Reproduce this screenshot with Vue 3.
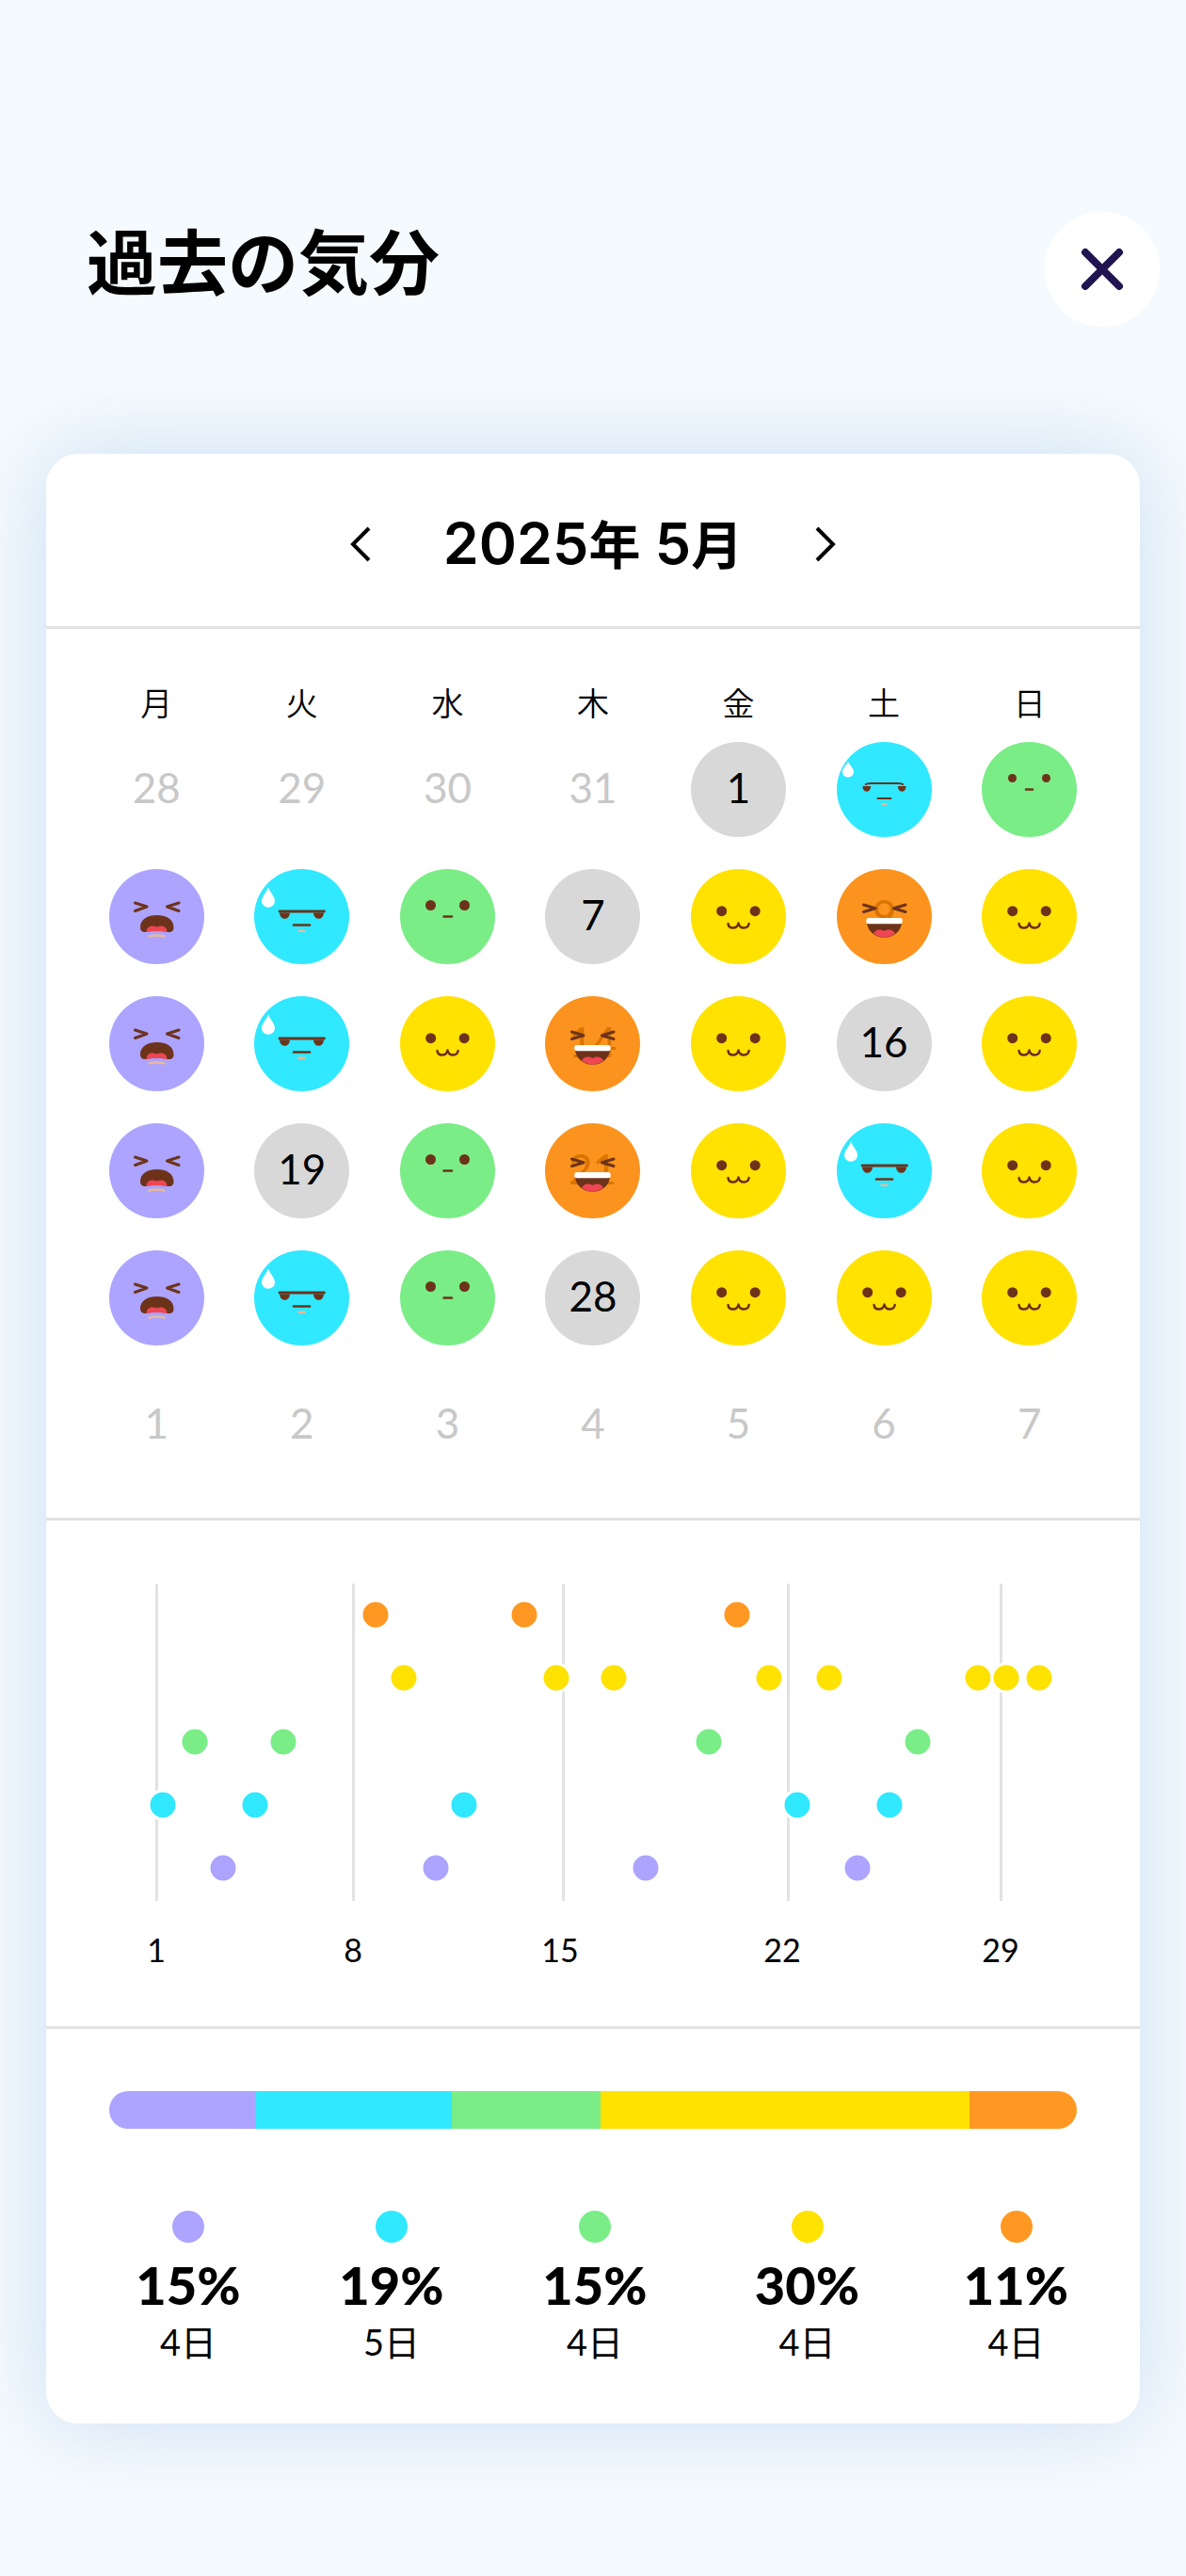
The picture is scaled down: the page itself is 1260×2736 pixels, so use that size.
<script setup>
import { ref, computed } from 'vue';

const year = ref(2025);
const month = ref(5);

const moodColors = {
    angry: '#aca4ff',
    tired: '#30e8ff',
    calm: '#7aed87',
    happy: '#ffe200',
    laugh: '#ff9822',
};

const weekdays = ['月', '火', '水', '木', '金', '土', '日'];

// 月ごとの気分（月曜始まり）
const weeks = [
    [
        { day: 28, out: true }, { day: 29, out: true }, { day: 30, out: true }, { day: 31, out: true },
        { day: 1 }, { day: 2, mood: 'tired', small: true }, { day: 3, mood: 'calm', small: true },
    ],
    [
        { day: 4, mood: 'angry' }, { day: 5, mood: 'tired' }, { day: 6, mood: 'calm' }, { day: 7 },
        { day: 8, mood: 'happy' }, { day: 9, mood: 'laugh' }, { day: 10, mood: 'happy' },
    ],
    [
        { day: 11, mood: 'angry' }, { day: 12, mood: 'tired' }, { day: 13, mood: 'happy' }, { day: 14, mood: 'laugh' },
        { day: 15, mood: 'happy' }, { day: 16 }, { day: 17, mood: 'happy' },
    ],
    [
        { day: 18, mood: 'angry' }, { day: 19 }, { day: 20, mood: 'calm' }, { day: 21, mood: 'laugh' },
        { day: 22, mood: 'happy' }, { day: 23, mood: 'tired' }, { day: 24, mood: 'happy' },
    ],
    [
        { day: 25, mood: 'angry' }, { day: 26, mood: 'tired' }, { day: 27, mood: 'calm' }, { day: 28 },
        { day: 29, mood: 'happy' }, { day: 30, mood: 'happy' }, { day: 31, mood: 'happy' },
    ],
    [
        { day: 1, out: true }, { day: 2, out: true }, { day: 3, out: true }, { day: 4, out: true },
        { day: 5, out: true }, { day: 6, out: true }, { day: 7, out: true },
    ],
];

// グラフの縦線とラベル
const ticks = [
    { label: '1', x: 117, textX: 117 },
    { label: '8', x: 326, textX: 326 },
    { label: '15', x: 549, textX: 546 },
    { label: '22', x: 788, textX: 782 },
    { label: '29', x: 1014, textX: 1014 },
];

const chartRows = [
    { mood: 'laugh', y: 100, xs: [350, 508, 734] },
    { mood: 'happy', y: 167, xs: [380, 542, 603, 768, 832, 990, 1020, 1055] },
    { mood: 'calm', y: 235, xs: [158, 252, 704, 926] },
    { mood: 'tired', y: 302, xs: [124, 222, 444, 798, 896] },
    { mood: 'angry', y: 369, xs: [188, 414, 637, 862] },
];

const stats = [
    { mood: 'angry', percent: 15, days: 4, share: 155 },
    { mood: 'tired', percent: 19, days: 5, share: 209 },
    { mood: 'calm', percent: 15, days: 4, share: 158 },
    { mood: 'happy', percent: 30, days: 4, share: 392 },
    { mood: 'laugh', percent: 11, days: 4, share: 114 },
];

const total = computed(() => stats.reduce((sum, item) => sum + item.share, 0));

const moveMonth = (step) => {
    const next = new Date(year.value, month.value - 1 + step, 1);
    year.value = next.getFullYear();
    month.value = next.getMonth() + 1;
};
</script>

<template>
    <main class="page">
        <header class="page-header">
            <h1 class="title">過去の気分</h1>
            <button class="close" type="button" aria-label="閉じる">
                <svg width="56" height="56" viewBox="0 0 56 56">
                    <path d="M10 10L46 46M46 10L10 46" fill="none" stroke="#211551" stroke-width="8" stroke-linecap="round" />
                </svg>
            </button>
        </header>

        <div class="card">
            <div class="month-bar">
                <button class="arrow" type="button" aria-label="前の月" @click="moveMonth(-1)">
                    <svg width="28" height="40" viewBox="0 0 28 40">
                        <path d="M23 3L6 20L23 37" fill="none" stroke="#000" stroke-width="4" />
                    </svg>
                </button>
                <h2 class="month">{{ year }}<span class="unit">年</span> {{ month }}<span class="unit">月</span></h2>
                <button class="arrow" type="button" aria-label="次の月" @click="moveMonth(1)">
                    <svg width="28" height="40" viewBox="0 0 28 40">
                        <path d="M5 3L22 20L5 37" fill="none" stroke="#000" stroke-width="4" />
                    </svg>
                </button>
            </div>

            <section class="calendar-area">
                <table class="calendar">
                    <thead>
                        <tr>
                            <th v-for="name in weekdays" :key="name" scope="col">{{ name }}</th>
                        </tr>
                    </thead>
                    <tbody>
                        <tr v-for="(week, i) in weeks" :key="i">
                            <td v-for="(item, j) in week" :key="j">
                                <svg v-if="item.mood" class="face" viewBox="0 0 101 101" role="img" :aria-label="`${item.day}日`">
                                    <g v-if="item.mood === 'angry'">
                                        <circle cx="50.5" cy="50.5" r="50.5" fill="#aca4ff" />
                                        <path d="M27.5 36L40 40L27.5 44.5M74 36L61.5 40L74 44.5" class="line" />
                                        <path d="M33 62C33 53 41 49 50.7 49C60.5 49 68.5 53 68.5 62C68.5 66 66 67.5 62 67H39.5C35.5 67.5 33 66 33 62Z" fill="#6d331a" />
                                        <path d="M39.5 67C39.5 62 44 59 50.5 61.5C57 59 61.5 62 61.5 67C55 66 46 66 39.5 67Z" fill="#ef4653" />
                                        <path d="M39.5 67.5C46 66 55 66 61.5 67.5" fill="none" stroke="#aca4ff" stroke-width="1" />
                                        <path d="M42.5 71.5C47 70.5 54 70.5 58.5 71.5" fill="none" stroke="#e6b99b" stroke-width="2.5" stroke-linecap="round" />
                                    </g>
                                    <g v-else-if="item.mood === 'tired' && item.small">
                                        <circle cx="50.5" cy="50.5" r="50.5" fill="#30e8ff" />
                                        <path d="M12 21C14 25 18 28 18 32A6 5.5 0 0 1 6 32C6 28 10 25 12 21Z" fill="#fff" />
                                        <path d="M27.5 47A4.3 5 0 1 0 36 47ZM65 47A4.3 5 0 1 0 73.5 47Z" fill="#6d331a" />
                                        <path d="M30 45.5Q32 44 36 44H65Q69 44 71 45.5" fill="none" stroke="#6d331a" stroke-width="2" />
                                        <path d="M43.5 60H57.5" stroke="#6d331a" stroke-width="2" stroke-linecap="round" />
                                        <path d="M48 66H53" stroke="#e6b99b" stroke-width="2" stroke-linecap="round" />
                                    </g>
                                    <g v-else-if="item.mood === 'tired'">
                                        <circle cx="50.5" cy="50.5" r="50.5" fill="#30e8ff" />
                                        <path d="M15 19.5C17 25 22 29 22 34A7 6.7 0 0 1 8 34C8 29 13 25 15 19.5Z" fill="#fff" />
                                        <path d="M27 46.5A5.5 6.3 0 1 0 38 46.5ZM63 46.5A5.5 6.3 0 1 0 74 46.5Z" fill="#6d331a" />
                                        <path d="M27 45H74.5" stroke="#6d331a" stroke-width="2.8" stroke-linecap="round" />
                                        <path d="M42 59.5H59" stroke="#6d331a" stroke-width="2.6" stroke-linecap="round" />
                                        <path d="M47.5 65.7H53.5" stroke="#e6b99b" stroke-width="2.6" stroke-linecap="round" />
                                    </g>
                                    <g v-else-if="item.mood === 'calm'">
                                        <circle cx="50.5" cy="50.5" r="50.5" fill="#7aed87" />
                                        <circle cx="32.5" cy="38.5" :r="item.small ? 4.5 : 5.5" fill="#6d331a" />
                                        <circle cx="68.5" cy="38.5" :r="item.small ? 4.5 : 5.5" fill="#6d331a" />
                                        <path :d="item.small ? 'M47 50.5H54' : 'M46.5 50.5H55'" stroke="#6d331a" stroke-width="2.5" stroke-linecap="round" />
                                    </g>
                                    <g v-else-if="item.mood === 'happy'">
                                        <circle cx="50.5" cy="50.5" r="50.5" fill="#ffe200" />
                                        <circle cx="32.7" cy="44.7" r="5.5" fill="#6d331a" />
                                        <circle cx="68.2" cy="44.7" r="5.5" fill="#6d331a" />
                                        <path d="M39.5 58C40 61.5 42 62.5 44.5 62.5C48 62.5 50 60.5 50.5 57.5C51 60.5 53 62.5 56.5 62.5C59 62.5 61 61.5 61.7 58" fill="none" stroke="#6d2c1a" stroke-width="2.4" stroke-linecap="round" stroke-linejoin="round" />
                                    </g>
                                    <g v-else>
                                        <circle cx="50.5" cy="50.5" r="50.5" fill="#fb931e" />
                                        <text x="50.5" y="65" class="ghost-day">{{ item.day }}</text>
                                        <path d="M28.5 38L41 41.7L28.5 45.5M73 38L60.5 41.7L73 45.5" class="line" />
                                        <path d="M32 57H69C68 67 60 72.7 50.5 72.7C41 72.7 33 67 32 57Z" fill="#6d331a" />
                                        <path d="M39 68.5C41 64 47 63.5 50.5 66C54 63.5 60 64 62 68.5C55.5 74 45.5 74 39 68.5Z" fill="#ef4653" />
                                        <rect x="31.3" y="52" width="38.4" height="6.2" rx="2.5" fill="#fff" />
                                    </g>
                                </svg>
                                <span v-else :class="['day', { 'day-out': item.out }]">{{ item.day }}</span>
                            </td>
                        </tr>
                    </tbody>
                </table>
            </section>

            <section class="chart-area">
                <svg class="chart" viewBox="0 0 1162 537" role="img" aria-label="気分の推移">
                    <line
                        v-for="tick in ticks"
                        :key="tick.label"
                        :x1="tick.x"
                        y1="67"
                        :x2="tick.x"
                        y2="404"
                        stroke="#e2e2e2"
                        stroke-width="3"
                        shape-rendering="crispEdges"
                    />
                    <g v-for="row in chartRows" :key="row.mood">
                        <circle v-for="x in row.xs" :key="x" :cx="x" :cy="row.y" r="15" :fill="moodColors[row.mood]" stroke="#fff" stroke-width="3" />
                    </g>
                    <text v-for="tick in ticks" :key="tick.label" :x="tick.textX" y="469" class="tick-label">{{ tick.label }}</text>
                </svg>
            </section>

            <section class="stats-area">
                <div class="bar">
                    <div
                        v-for="item in stats"
                        :key="item.mood"
                        :style="{ width: `${item.share / total * 100}%`, backgroundColor: moodColors[item.mood] }"
                    ></div>
                </div>
                <ul class="stats">
                    <li v-for="item in stats" :key="item.mood" class="stat">
                        <span class="dot" :style="{ backgroundColor: moodColors[item.mood] }"></span>
                        <strong class="percent">{{ item.percent }}%</strong>
                        <span class="days">{{ item.days }}日</span>
                    </li>
                </ul>
            </section>
        </div>
    </main>
</template>

<style>
body {
    background-color: #f5fafe;
}
</style>

<style scoped>
.page {
    box-sizing: border-box;
    min-height: 100vh;
    padding: 225px 0 160px;
    overflow: hidden;
    color: #000;
    font-family: Lato, "Noto Sans CJK JP", sans-serif;
}

.page-header {
    display: flex;
    justify-content: space-between;
    padding: 0 28px 0 92px;
}

.title {
    margin: 0;
    font-size: 75px;
    font-weight: 700;
    line-height: 106px;
}

.close {
    display: flex;
    align-items: center;
    justify-content: center;
    width: 122px;
    height: 122px;
    padding: 0;
    border: none;
    border-radius: 50%;
    background-color: #fff;
    cursor: pointer;
}

.card {
    margin: 135px 49px 0;
    border-radius: 34px;
    background-color: #fff;
    box-shadow: 0 0 90px rgba(105, 163, 214, 0.3);
}

.month-bar {
    box-sizing: border-box;
    display: flex;
    align-items: center;
    justify-content: center;
    gap: 74px;
    height: 183px;
    padding-top: 8px;
}

.arrow {
    display: flex;
    padding: 0;
    border: none;
    background: none;
    cursor: pointer;
}

.month {
    margin: 0;
    font-family: Inter, "Noto Sans CJK JP", sans-serif;
    font-size: 61px;
    font-weight: 600;
    line-height: 80px;
}

.unit {
    font-size: 55px;
}

.calendar-area {
    padding: 55px 40px 31px;
    border-top: 3px solid #e2e2e2;
}

.calendar {
    width: 100%;
    table-layout: fixed;
    border-collapse: collapse;
}

.calendar th {
    height: 48px;
    padding: 0;
    font-size: 34px;
    font-weight: 350;
    line-height: 46px;
}

.calendar td {
    height: 135px;
    padding: 0;
    text-align: center;
    vertical-align: middle;
}

.face,
.day {
    display: block;
    width: 101px;
    height: 101px;
    margin: 0 auto;
}

.day {
    border-radius: 50%;
    background-color: #d8d8d8;
    font-size: 44px;
    line-height: 97px;
}

.day-out {
    background: none;
    color: #c8c8c8;
}

.line {
    fill: none;
    stroke: #6d331a;
    stroke-width: 3;
    stroke-linecap: round;
    stroke-linejoin: round;
}

.ghost-day {
    fill: #d97400;
    font-size: 44px;
    text-anchor: middle;
}

.chart-area {
    border-top: 3px solid #e2e2e2;
}

.chart {
    display: block;
    width: 100%;
}

.tick-label {
    font-size: 34px;
    text-anchor: middle;
}

.stats-area {
    padding: 66px 67px 60px;
    border-top: 3px solid #e2e2e2;
}

.bar {
    display: flex;
    height: 40px;
    overflow: hidden;
    border-radius: 20px;
}

.stats {
    display: grid;
    grid-template-columns: 216fr 216fr 216fr 235fr 209fr;
    margin: 87px -40px 0 -24px;
    padding: 0;
    list-style: none;
}

.stat {
    display: flex;
    flex-direction: column;
    align-items: center;
}

.dot {
    width: 34px;
    height: 34px;
    border-radius: 50%;
}

.percent {
    margin-top: 12px;
    font-size: 56px;
    font-weight: 900;
    line-height: 66px;
}

.days {
    font-size: 38px;
    font-weight: 400;
    line-height: 54px;
}
</style>
